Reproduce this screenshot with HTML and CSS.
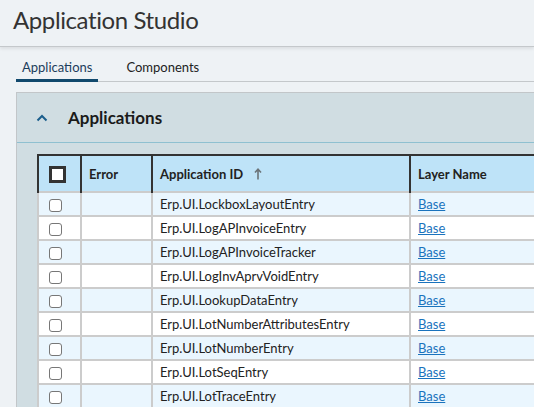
FILE: index.html
```html
<!DOCTYPE html>
<html lang="en">
  <head>
    <meta charset="UTF-8" />
    <link rel="stylesheet" href="styles.css">
    <title>Application Studio</title>
  </head>
  <body>
    <div class="header">
      <h1 class="title">Application Studio</h1>
    </div>

    <div class="tabs">
      <a href="#" class="tab active">Applications</a>
      <a href="#" class="tab">Components</a>
    </div>

    <div class="panel">
      <div class="panel-header">
        <svg class="chevron" width="12" height="8" viewBox="0 0 12 8">
          <path d="M1.5 6.5 L6 2 L10.5 6.5" fill="none" stroke="#1b5e8c" stroke-width="2" />
        </svg>
        <span class="panel-title">Applications</span>
      </div>

      <div class="grid-wrap">
        <table class="grid">
          <colgroup>
            <col class="col-check" />
            <col class="col-error" />
            <col class="col-id" />
            <col class="col-layer" />
          </colgroup>
          <thead>
            <tr>
              <th class="check-cell"><span class="box box-head"></span></th>
              <th>Error</th>
              <th>
                Application ID
                <svg class="sort" width="8" height="12" viewBox="0 0 8 12">
                  <path d="M4 11.5 V1.5 M1 4.5 L4 1.2 L7 4.5" fill="none" stroke="#6b7378" stroke-width="1.6" />
                </svg>
              </th>
              <th>Layer Name</th>
            </tr>
          </thead>
          <tbody>
            <tr><td class="check-cell"><span class="box"></span></td><td></td><td>Erp.UI.LockboxLayoutEntry</td><td><a href="#">Base</a></td></tr>
            <tr><td class="check-cell"><span class="box"></span></td><td></td><td>Erp.UI.LogAPInvoiceEntry</td><td><a href="#">Base</a></td></tr>
            <tr><td class="check-cell"><span class="box"></span></td><td></td><td>Erp.UI.LogAPInvoiceTracker</td><td><a href="#">Base</a></td></tr>
            <tr><td class="check-cell"><span class="box"></span></td><td></td><td>Erp.UI.LogInvAprvVoidEntry</td><td><a href="#">Base</a></td></tr>
            <tr><td class="check-cell"><span class="box"></span></td><td></td><td>Erp.UI.LookupDataEntry</td><td><a href="#">Base</a></td></tr>
            <tr><td class="check-cell"><span class="box"></span></td><td></td><td>Erp.UI.LotNumberAttributesEntry</td><td><a href="#">Base</a></td></tr>
            <tr><td class="check-cell"><span class="box"></span></td><td></td><td>Erp.UI.LotNumberEntry</td><td><a href="#">Base</a></td></tr>
            <tr><td class="check-cell"><span class="box"></span></td><td></td><td>Erp.UI.LotSeqEntry</td><td><a href="#">Base</a></td></tr>
            <tr><td class="check-cell"><span class="box"></span></td><td></td><td>Erp.UI.LotTraceEntry</td><td><a href="#">Base</a></td></tr>
          </tbody>
        </table>
      </div>
    </div>
  </body>
</html>
```

FILE: styles.css
```css
html,
body {
  margin: 0;
  background-color: #eef2f5;
  font-family: Lato, "Liberation Sans", sans-serif;
  color: #222;
  overflow: hidden;
  height: 407px;
}

.header {
  height: 46px;
  border-bottom: 1px solid #c4c8cb;
  box-shadow: 0 2px 3px rgba(0, 0, 0, 0.08);
}

.title {
  margin: 0;
  padding: 5px 0 0 13px;
  font-size: 24px;
  letter-spacing: -0.4px;
  font-weight: normal;
  color: #333;
}

.tabs {
  display: flex;
  margin: 9px 0 0 16px;
  border-bottom: 1px solid #c4c8cb;
}

.tab {
  display: block;
  padding: 3px 6px 4px 6px;
  margin-right: 22px;
  margin-bottom: -1px;
  font-size: 13px;
  line-height: 16px;
  color: #222;
  text-decoration: none;
  border-bottom: 3px solid transparent;
}

.tab.active {
  color: #1c3d5c;
  border-bottom-color: #11496d;
}

.panel {
  margin: 10px 0 0 16px;
  background-color: #d0dde2;
  border-top: 1px solid #c2c6c9;
  border-left: 1px solid #c2c6c9;
  height: 400px;
}

.panel-header {
  display: flex;
  align-items: center;
  height: 49px;
  border-bottom: 1px solid #8fc0d0;
}

.chevron {
  margin-left: 19px;
  margin-right: 20px;
}

.panel-title {
  font-size: 17px;
  font-weight: bold;
  color: #1a1a1a;
}

.grid-wrap {
  padding: 11px 0 0 20px;
}

.grid {
  border-collapse: collapse;
  table-layout: fixed;
  width: 560px;
  font-size: 13px;
}

.col-check {
  width: 43px;
}

.col-error {
  width: 71px;
}

.col-id {
  width: 258px;
}

.col-layer {
  width: 188px;
}

.grid th {
  height: 35px;
  padding: 0 0 0 7px;
  text-align: left;
  font-weight: bold;
  background-color: #bee3f8;
  border: 2px solid #333;
  border-bottom: 1px solid #9cc3d8;
}

.grid td {
  height: 22px;
  padding: 0 0 0 7px;
  border: 2px solid #cccccc;
  white-space: nowrap;
}

.grid tbody tr:nth-child(odd) td {
  background-color: #eaf6fe;
}

.grid tbody tr:nth-child(even) td {
  background-color: #ffffff;
}

.grid th.check-cell,
.grid td.check-cell {
  padding: 0 0 0 10px;
}

.box {
  display: inline-block;
  width: 11px;
  height: 11px;
  border: 1px solid #777;
  border-radius: 3px;
  background-color: white;
  vertical-align: middle;
}

.box-head {
  width: 11px;
  height: 11px;
  border: 3px solid #333;
  border-radius: 0;
}

.sort {
  margin-left: 8px;
  vertical-align: -1px;
}

.grid a {
  color: #1a73bd;
}
```
